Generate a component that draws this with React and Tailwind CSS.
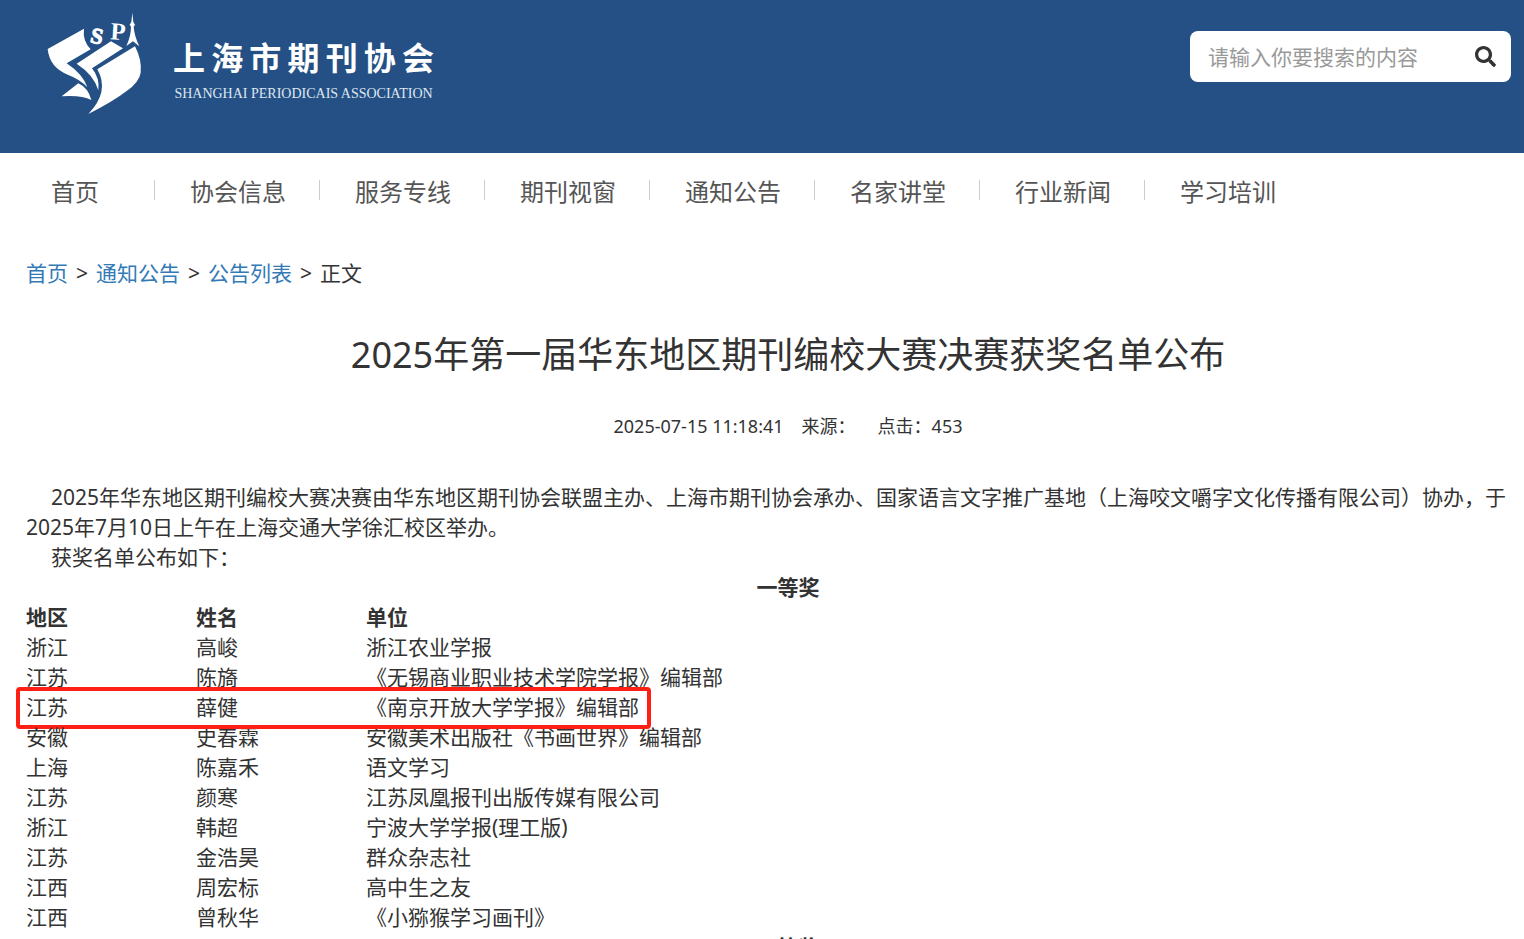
import React, { useState } from "react";
import { FaSearch } from "react-icons/fa";

const navItems = [
  "首页",
  "协会信息",
  "服务专线",
  "期刊视窗",
  "通知公告",
  "名家讲堂",
  "行业新闻",
  "学习培训",
];

const crumbs = ["首页", "通知公告", "公告列表"];

const firstPrize = [
  { area: "浙江", name: "高峻", unit: "浙江农业学报" },
  { area: "江苏", name: "陈旖", unit: "《无锡商业职业技术学院学报》编辑部" },
  {
    area: "江苏",
    name: "薛健",
    unit: "《南京开放大学学报》编辑部",
    marked: true,
  },
  { area: "安徽", name: "史春霖", unit: "安徽美术出版社《书画世界》编辑部" },
  { area: "上海", name: "陈嘉禾", unit: "语文学习" },
  { area: "江苏", name: "颜寒", unit: "江苏凤凰报刊出版传媒有限公司" },
  { area: "浙江", name: "韩超", unit: "宁波大学学报(理工版)" },
  { area: "江苏", name: "金浩昊", unit: "群众杂志社" },
  { area: "江西", name: "周宏标", unit: "高中生之友" },
  { area: "江西", name: "曾秋华", unit: "《小猕猴学习画刊》" },
];

const LogoMark = () => (
  <svg
    viewBox="45 30 300 324"
    className="w-[100px] h-[108px] shrink-0"
    fill="#fff"
    aria-hidden="true"
  >
    {/* Book pages */}
    <path d="M53 147 L162 86 Q157 122 182 148 L110 190 Q158 222 172 262 Q150 238 115 225 Q58 202 53 147Z" />
    <path d="M140 191 L243 124 L279 145 L186 205 Q210 235 205 271 Q192 225 140 191Z" />
    <path d="M202 208 L315 139 Q336 180 332 218 Q328 246 290 273 Q250 304 175 342 Q240 275 202 208Z" />
    <path d="M95 289 L145 250 Q175 264 184 300 Q155 285 95 289Z" />

    {/* Letters */}
    <text
      x="183"
      y="131"
      fontSize="66"
      fontWeight="700"
      fontFamily="Liberation Serif, serif"
      transform="rotate(12 204 108)"
      stroke="#fff"
      strokeWidth="3"
    >
      S
    </text>
    <text
      x="242"
      y="119"
      fontSize="74"
      fontWeight="700"
      fontFamily="Liberation Serif, serif"
      transform="rotate(4 262 95)"
    >
      P
    </text>

    {/* Tower */}
    <path d="M307 38 L310 66 L315 74 L311 80 Q313 108 328 139 L309 124 L289 138 Q303 108 303 80 L299 74 L304 66Z" />
  </svg>
);

const Header = () => {
  const [keyword, setKeyword] = useState("");

  return (
    <header className="h-[153px] bg-[#245085] flex items-start justify-between pl-[45px] pr-[13px]">
      <a href="#" className="flex items-start gap-7 pt-[10px] text-white">
        <LogoMark />
        <div className="w-[261px] pt-6">
          <p className="text-[32px] leading-[48px] font-bold [text-align-last:justify]">
            上海市期刊协会
          </p>
          <p className="text-[14px] leading-6 text-center whitespace-nowrap text-[#dfe7f0] font-['Liberation_Serif',serif]">
            SHANGHAI PERIODICAIS ASSOCIATION
          </p>
        </div>
      </a>
      <form
        className="mt-[31px] w-[321px] h-[51px] rounded-lg bg-white flex items-center pl-[18px] pr-[15px]"
        onSubmit={(e) => e.preventDefault()}
      >
        <input
          type="text"
          aria-label="搜索"
          value={keyword}
          onChange={(e) => setKeyword(e.target.value)}
          placeholder="请输入你要搜索的内容"
          className="flex-1 min-w-0 text-[21px] leading-[30px] text-[#333] placeholder:text-[#999] outline-none"
        />
        <button type="submit" aria-label="提交搜索" className="text-[#333]">
          <FaSearch size={21} />
        </button>
      </form>
    </header>
  );
};

const Nav = () => (
  <nav className="pl-4 pt-5">
    <ul className="flex">
      {navItems.map((item) => (
        <li
          key={item}
          className="group w-[165px] first:w-[139px] flex items-center justify-between pl-[35px]"
        >
          <a href="#" className="text-[24px] leading-[38px] text-[#555]">
            {item}
          </a>
          <span className="w-px h-5 mb-1 bg-[#ccc] group-last:hidden" />
        </li>
      ))}
    </ul>
  </nav>
);

const App = () => {
  return (
    <div className="h-screen overflow-hidden bg-white text-[#333] font-['Noto_Sans','Noto_Sans_CJK_SC',sans-serif]">
      <Header />
      <Nav />
      {/* The article column runs a little past the right edge */}
      <main className="box-content w-full pl-[26px] pt-[47px] text-[21px] leading-[30px]">
        <div className="flex gap-2">
          {crumbs.map((crumb) => (
            <React.Fragment key={crumb}>
              <a href="#" className="text-[#337ab7]">
                {crumb}
              </a>
              <span>&gt;</span>
            </React.Fragment>
          ))}
          <span>正文</span>
        </div>

        <h1 className="mt-10 text-center text-[36px] leading-[54px]">
          2025年第一届华东地区期刊编校大赛决赛获奖名单公布
        </h1>

        <div className="mt-[31px] flex justify-center gap-[18px] text-[18px] leading-[26px]">
          <span>2025-07-15 11:18:41</span>
          <span className="pr-1">来源：</span>
          <span>点击：453</span>
        </div>

        <div className="mt-[43px]">
          <p className="indent-[25px]">
            2025年华东地区期刊编校大赛决赛由华东地区期刊协会联盟主办、上海市期刊协会承办、国家语言文字推广基地（上海咬文嚼字文化传播有限公司）协办，于2025年7月10日上午在上海交通大学徐汇校区举办。
          </p>
          <p className="indent-[25px]">获奖名单公布如下：</p>
        </div>

        <h2 className="text-center font-bold">一等奖</h2>
        <table className="w-full table-fixed text-left">
          <thead>
            <tr>
              <th className="w-[170px]">地区</th>
              <th className="w-[170px]">姓名</th>
              <th>单位</th>
            </tr>
          </thead>
          <tbody>
            {firstPrize.map((row) => (
              <tr key={row.name}>
                <td className="relative">
                  {row.area}
                  {row.marked && (
                    <span className="absolute -left-[10px] -top-[5px] w-[635px] h-[42px] border-4 border-[#ff2015] rounded-sm" />
                  )}
                </td>
                <td>{row.name}</td>
                <td>{row.unit}</td>
              </tr>
            ))}
          </tbody>
        </table>
        <h2 className="text-center font-bold">二等奖</h2>
      </main>
    </div>
  );
};

export default App;
